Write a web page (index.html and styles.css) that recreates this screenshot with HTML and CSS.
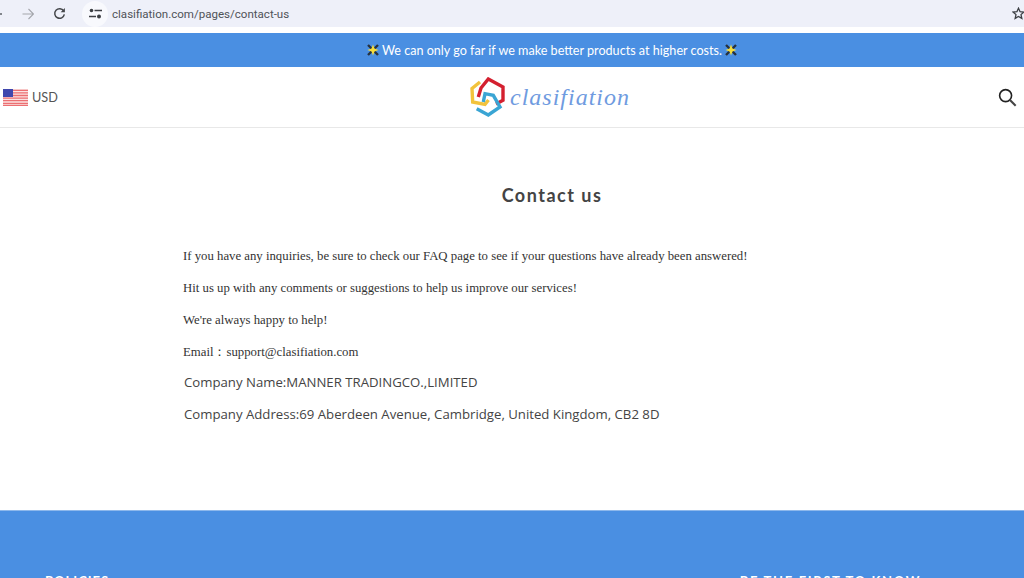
FILE: index.html
```html
<!DOCTYPE html>
<html lang="en">
<head>
    <meta charset="UTF-8">
    <meta name="viewport" content="width=device-width, initial-scale=1.0">
    <title>Contact us</title>
    <link rel="stylesheet" href="styles.css">
</head>
<body>

    <div class="browser-bar">
        <div class="nav-icons">
            <svg class="nav-back" width="12" height="12" viewBox="0 0 12 12"><path d="M11 6H1M6 1L1 6l5 5" fill="none" stroke="#5f6368" stroke-width="1.3"/></svg>
            <svg class="nav-forward" width="12" height="12" viewBox="0 0 12 12"><path d="M0.500 6h11M6.500 1l5 5-5 5" fill="none" stroke="#a4a6ac" stroke-width="1.100"/></svg>
            <svg class="nav-reload" width="13" height="13" viewBox="0 0 14 14"><path d="M11.500 4.200A5.200 5.200 0 1 0 12.200 8" fill="none" stroke="#45474b" stroke-width="1.600"/><path d="M12.800 1v4.600H8.200z" fill="#45474b"/></svg>
        </div>
        <div class="url-pill">
            <span class="site-icon">
                <svg width="13" height="11" viewBox="0 0 13 11"><circle cx="2.500" cy="2.500" r="1.800" fill="#3c3f44"/><path d="M5.500 2.500H13M0 8.500h7" stroke="#3c3f44" stroke-width="1.400" fill="none"/><circle cx="10" cy="8.500" r="2" fill="#3c3f44"/></svg>
            </span>
            <span class="url-text">clasifiation.com/pages/contact-us</span>
        </div>
        <svg class="bookmark" width="13" height="13" viewBox="0 0 14 14"><path d="M7 1.300l1.700 3.800 4 .4-3 2.700.9 4L7 10.100l-3.600 2.100.9-4-3-2.700 4-.4z" fill="none" stroke="#3c3f44" stroke-width="1.400"/></svg>
    </div>

    <div class="announcement">
        <span class="spark">
            <svg width="14" height="14" viewBox="0 0 14 14"><path d="M2 2l10 10M12 2L2 12" stroke="#26323f" stroke-width="2.400"/><path d="M7 1.500l1.500 4 4 1.500-4 1.500-1.500 4-1.500-4-4-1.500 4-1.500z" fill="#f4dc3c"/></svg>
        </span>
        <span>We can only go far if we make better products at higher costs.</span>
        <span class="spark">
            <svg width="14" height="14" viewBox="0 0 14 14"><path d="M2 2l10 10M12 2L2 12" stroke="#26323f" stroke-width="2.400"/><path d="M7 1.500l1.500 4 4 1.500-4 1.500-1.500 4-1.500-4-4-1.500 4-1.500z" fill="#f4dc3c"/></svg>
        </span>
    </div>

    <header class="site-header">
        <div class="currency">
            <svg class="flag" width="25" height="17" viewBox="0 0 25 17">
                <rect width="25" height="17" fill="#fbe3e3"/>
                <path d="M0 1.300h25M0 3.900h25M0 6.500h25M0 9.100h25M0 11.700h25M0 14.300h25M0 16.400h25" stroke="#ec6f72" stroke-width="1.300"/>
                <rect width="10" height="8" fill="#3f47ad"/>
            </svg>
            <span>USD</span>
        </div>
        <div class="logo">
            <svg width="38" height="40" viewBox="0 0 38 40">
                <path d="M11 5L3 11.500 3.700 25 16 27.300 19.500 23" fill="none" stroke="#f2c33c" stroke-width="3.400"/>
                <path d="M9.300 20L12 11 19.300 2 34 10 34 23.300 27 27" fill="none" stroke="#d4202f" stroke-width="3.400"/>
                <path d="M7.700 31.700L19.300 38 31 30 24.300 18.300 16 16.700 14.300 25" fill="none" stroke="#3aa5d4" stroke-width="3.400"/>
            </svg>
            <span class="logo-text">clasifiation</span>
        </div>
        <svg class="search-icon" width="19" height="19" viewBox="0 0 20 20"><circle cx="8" cy="8" r="6.300" fill="none" stroke="#222" stroke-width="1.700"/><path d="M12.600 12.600l6 6" stroke="#444" stroke-width="2.200"/></svg>
    </header>

    <main class="page-content">
        <h1>Contact us</h1>
        <div class="rich-text">
            <p>If you have any inquiries, be sure to check our FAQ page to see if your questions have already been answered!</p>
            <p>Hit us up with any comments or suggestions to help us improve our services!</p>
            <p>We're always happy to help!</p>
            <p>Email：support@clasifiation.com</p>
        </div>
        <div class="company-info">
            <p>Company Name:MANNER TRADINGCO.,LIMITED</p>
            <p>Company Address:69 Aberdeen Avenue, Cambridge, United Kingdom, CB2 8D</p>
        </div>
    </main>

    <footer class="site-footer">
        <h4>POLICIES</h4>
        <h4 class="signup-title">BE THE FIRST TO KNOW</h4>
    </footer>

</body>
</html>
```

FILE: styles.css
```css
html, body {
    margin: 0;
    height: 578px;
    overflow: hidden;
}
body {
    font-family: "Lato", "Open Sans", sans-serif;
    background-color: #fff;
    color: #333;
    display: flex;
    flex-direction: column;
}
.browser-bar {
    height: 27px;
    background-color: #eef0f9;
    display: flex;
    align-items: center;
    margin-bottom: 6px;
}
.nav-icons {
    display: flex;
    align-items: center;
    gap: 19px;
    margin-left: -9px;
}
.nav-back,
.nav-forward,
.nav-reload {
    flex: none;
}
.url-pill {
    flex: 1;
    display: flex;
    align-items: center;
    gap: 4px;
    margin-left: 16px;
    height: 27px;
}
.site-icon {
    width: 26px;
    height: 26px;
    border-radius: 50%;
    background-color: #f8f9fd;
    display: flex;
    align-items: center;
    justify-content: center;
}
.url-text {
    font-family: "Roboto", sans-serif;
    font-size: 11.550px;
    color: #4f5257;
}
.bookmark {
    margin-right: -1px;
}
.announcement {
    height: 34px;
    background-color: #4a8fe2;
    color: #fff;
    font-size: 12.600px;
    display: flex;
    align-items: center;
    justify-content: center;
    gap: 2px;
    padding-left: 80px;
    box-sizing: border-box;
}
.spark {
    display: flex;
}
.site-header {
    height: 61px;
    box-sizing: border-box;
    border-bottom: 1px solid #e8e8e8;
    display: flex;
    align-items: center;
    justify-content: space-between;
    position: relative;
    padding: 0 7px 0 3px;
}
.currency {
    display: flex;
    align-items: center;
    gap: 4px;
    font-size: 12.700px;
    color: #555;
}
.logo {
    position: absolute;
    left: 469px;
    top: 10px;
    display: flex;
    align-items: center;
    gap: 3px;
}
.logo-text {
    font-family: "Liberation Serif", serif;
    font-style: italic;
    font-size: 24px;
    letter-spacing: 1px;
    color: #6f9be0;
}
.page-content {
    flex: 1;
    padding: 0 103px 0 183px;
}
.page-content h1 {
    margin: 56px 0 0;
    text-align: center;
    font-size: 18px;
    line-height: 22px;
    font-weight: 700;
    letter-spacing: 1.500px;
    color: #444;
}
.rich-text {
    margin-top: 43px;
    font-family: "Liberation Serif", serif;
    font-size: 12.770px;
    color: #333;
    white-space: nowrap;
}
.rich-text p {
    margin: 0 0 18px;
    line-height: 14px;
}
.company-info {
    margin-top: -4px;
    font-family: "Open Sans", sans-serif;
    font-size: 13.200px;
    color: #444;
    padding-left: 1px;
    white-space: nowrap;
}
.company-info p {
    margin: 0 0 14px;
    line-height: 18px;
}
.site-footer {
    height: 68px;
    flex: none;
    background-color: #4a8fe2;
    display: flex;
    justify-content: space-between;
    padding: 0 103px 0 45px;
    overflow: hidden;
    border-top: 1px solid #8db8ec;
    box-sizing: border-box;
}
.site-footer h4 {
    margin: 62px 0 0;
    font-size: 13px;
    line-height: 16px;
    font-weight: 700;
    letter-spacing: 1px;
    color: #fff;
}
.site-footer .signup-title {
    letter-spacing: 1.650px;
}
```
